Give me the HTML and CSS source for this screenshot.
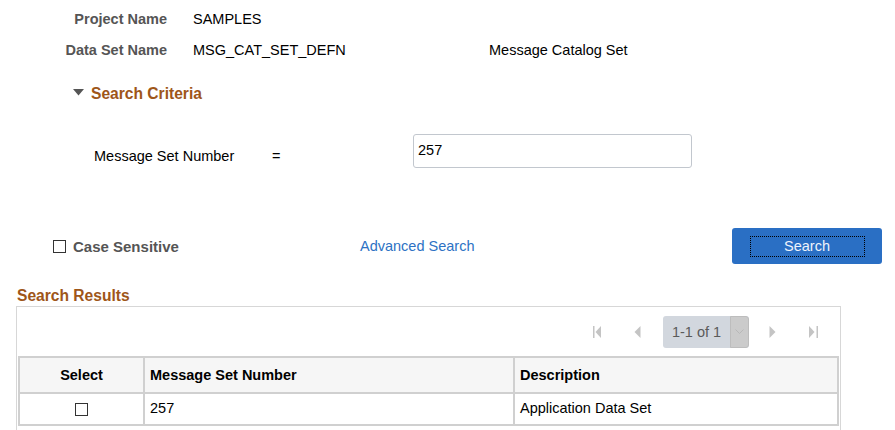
FILE: index.html
```html
<!DOCTYPE html>
<html>
<head>
<meta charset="utf-8">
<link rel="stylesheet" href="styles.css">
</head>
<body>
<div class="page">
  <div class="info">
    <div class="lbl">Project Name</div><div class="val">SAMPLES</div><div class="val3"></div>
    <div class="lbl">Data Set Name</div><div class="val">MSG_CAT_SET_DEFN</div><div class="val3">Message Catalog Set</div>
  </div>

  <div class="crit-head">
    <svg class="tri" width="11" height="7" viewBox="0 0 11 7"><polygon points="0,0 11,0 5.5,6.5" fill="#555"/></svg>
    <span class="heading">Search Criteria</span>
  </div>

  <div class="crit-row">
    <div class="crit-label">Message Set Number</div>
    <div class="crit-op">=</div>
    <div class="input">257</div>
  </div>

  <div class="action-row">
    <div class="case"><span class="cbox"></span><span class="case-text">Case Sensitive</span></div>
    <a class="adv">Advanced Search</a>
    <button class="btn"><span class="focus">Search</span></button>
  </div>

  <div class="heading results-head">Search Results</div>

  <div class="grid-box">
    <div class="toolbar">
      <svg class="nav first" width="9" height="14" viewBox="0 0 9 14"><rect x="0" y="1" width="1.5" height="12" fill="#c4c4c4"/><polygon points="8,1 8,13 2.5,7" fill="#c4c4c4"/></svg>
      <svg class="nav prev" width="7" height="14" viewBox="0 0 7 14"><polygon points="6.5,1 6.5,13 0.5,7" fill="#c4c4c4"/></svg>
      <div class="pager"><span class="pager-text">1-1 of 1</span><span class="pager-dd"><svg width="9" height="6" viewBox="0 0 9 6"><polyline points="0.5,0.5 4.5,4.5 8.5,0.5" fill="none" stroke="#b8b8b8" stroke-width="1"/></svg></span></div>
      <svg class="nav next" width="7" height="14" viewBox="0 0 7 14"><polygon points="0.5,1 0.5,13 6.5,7" fill="#c4c4c4"/></svg>
      <svg class="nav last" width="9" height="14" viewBox="0 0 9 14"><polygon points="0,1 0,13 5.5,7" fill="#c4c4c4"/><rect x="7.5" y="1" width="1.5" height="12" fill="#c4c4c4"/></svg>
    </div>
    <table class="results">
      <thead>
        <tr><th class="c-sel">Select</th><th class="c-num">Message Set Number</th><th class="c-desc">Description</th></tr>
      </thead>
      <tbody>
        <tr><td class="c-sel"><span class="cbox"></span></td><td>257</td><td>Application Data Set</td></tr>
      </tbody>
    </table>
    <div class="grid-foot"></div>
  </div>
</div>
</body>
</html>
```

FILE: styles.css
```css
html, body {
  margin: 0;
  padding: 0;
  background: #fff;
}
body {
  font-family: "Liberation Sans", Arial, sans-serif;
  font-size: 14.5px;
  color: #000;
}
.page {
  padding-top: 3px;
}
.info {
  display: grid;
  grid-template-columns: 167px 322px auto;
  grid-auto-rows: 31px;
  align-items: center;
}
.info .lbl {
  font-weight: bold;
  color: #555;
  text-align: right;
}
.info .val {
  padding-left: 26px;
}
.crit-head {
  margin-top: 17px;
  height: 24px;
  display: flex;
  align-items: center;
  padding-left: 73px;
}
.tri {
  margin-right: 7px;
  margin-top: -3px;
}
.heading {
  font-weight: bold;
  font-size: 15.6px;
  color: #9e5619;
}
.crit-row {
  margin-top: 28px;
  display: flex;
  align-items: flex-start;
  height: 34px;
  padding-left: 94px;
}
.crit-label {
  width: 178px;
  padding-top: 14px;
}
.crit-op {
  width: 141px;
  padding-top: 14px;
}
.input {
  box-sizing: border-box;
  width: 279px;
  height: 34px;
  border: 1px solid #c2c7ce;
  border-radius: 3px;
  padding-left: 4px;
  display: flex;
  align-items: center;
  padding-bottom: 2px;
}
.action-row {
  margin-top: 60px;
  display: flex;
  align-items: center;
  height: 36px;
  padding-left: 53px;
}
.case {
  display: flex;
  align-items: center;
  width: 307px;
}
.cbox {
  display: inline-block;
  box-sizing: border-box;
  width: 13px;
  height: 13px;
  border: 1px solid #333;
  background: #fff;
}
.case-text {
  margin-left: 7px;
  font-weight: bold;
  color: #555;
  font-size: 15px;
}
.adv {
  color: #2d72c4;
  width: 372px;
}
.btn {
  box-sizing: border-box;
  width: 150px;
  height: 36px;
  background: #2a6fc4;
  border: none;
  border-radius: 3px;
  padding: 0;
  display: flex;
  align-items: center;
  justify-content: center;
  font-family: "Liberation Sans", Arial, sans-serif;
  font-size: 14.5px;
  color: #eef3fb;
}
.focus {
  box-sizing: border-box;
  width: 115px;
  height: 21px;
  border: 1px dotted #000;
  display: flex;
  align-items: center;
  justify-content: center;
}
.results-head {
  margin-top: 23px;
  margin-left: 17px;
  height: 18px;
  line-height: 18px;
}
.grid-box {
  margin-top: 1px;
  margin-left: 16px;
  width: 825px;
  box-sizing: border-box;
  border: 1px solid #d7d7d7;
  border-bottom: none;
  padding: 0 1px;
}
.toolbar {
  height: 49px;
  display: flex;
  align-items: center;
  padding-left: 575px;
}
.nav.first { margin-right: 32px; }
.nav.prev { margin-right: 22px; }
.nav.next { margin-left: 20px; margin-right: 33px; }
.pager {
  display: flex;
  align-items: stretch;
  height: 32px;
  width: 86px;
  background: #d2d7de;
  border-radius: 3px;
  overflow: hidden;
}
.pager-text {
  flex: 1;
  display: flex;
  align-items: center;
  justify-content: center;
  color: #5a5a5a;
  font-size: 14.5px;
}
.pager-dd {
  width: 17px;
  background: #cbcbcb;
  border: 1px solid #bdbdbd;
  border-radius: 0 3px 3px 0;
  display: flex;
  align-items: center;
  justify-content: center;
}
.results {
  border-collapse: collapse;
  width: 821px;
  border: 2px solid #d0d0d0;
}
.results th, .results td {
  border: 2px solid #d0d0d0;
  text-align: left;
  padding: 0 0 0 5px;
}
.results th {
  background: #f6f6f6;
  height: 34px;
  font-weight: bold;
}
.results td {
  height: 28px;
  padding-bottom: 2px;
}
.results .c-sel {
  width: 123px;
  text-align: center;
  padding-left: 0;
}
.results td.c-sel .cbox {
  vertical-align: middle;
  margin-top: 2px;
}
.results .c-num {
  width: 363px;
}
.grid-foot {
  height: 20px;
}
```
